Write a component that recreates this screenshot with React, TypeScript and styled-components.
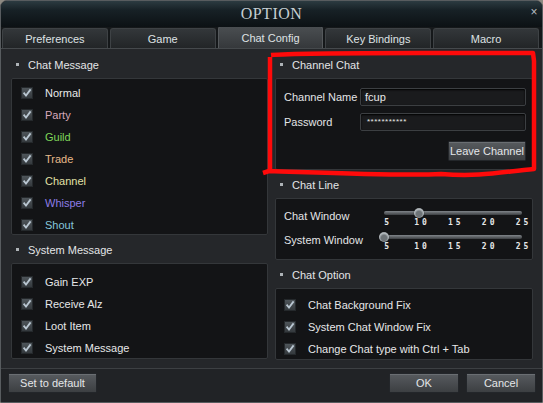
import React from "react";
import styled, { createGlobalStyle } from "styled-components";

const Global = createGlobalStyle`
  html, body { margin: 0; padding: 0; background: #8d8a82; }
  body { font-family: "Liberation Sans", Arial, sans-serif; }
  * { box-sizing: border-box; }
`;

const Window = styled.div`
  position: relative;
  width: 543px;
  height: 403px;
  display: flex;
  flex-direction: column;
  background: #1c1e20;
  border: 1px solid #585c5f;
  border-radius: 7px 7px 2px 2px;
  overflow: hidden;
`;

const TitleBar = styled.div`
  position: relative;
  height: 26px;
  flex: none;
  display: flex;
  align-items: center;
  justify-content: center;
  background: linear-gradient(#2c3b41 0%, #172126 35%, #0c1114 100%);
  font-family: "Liberation Serif", "Times New Roman", serif;
  font-size: 16px;
  letter-spacing: 0.5px;
  color: #c6ced2;
`;

const Close = styled.span`
  position: absolute;
  right: 4px;
  top: 4px;
  font-family: "Liberation Sans", Arial, sans-serif;
  font-size: 12px;
  color: #b8bec2;
`;

const TabRow = styled.div`
  height: 21px;
  flex: none;
  display: flex;
  align-items: flex-end;
  gap: 2px;
  padding: 0 3px 0 1px;
  background: #15181a;
`;

const Tab = styled.div<{ $active?: boolean }>`
  flex: 1;
  height: ${(p) => (p.$active ? "22px" : "20px")};
  display: flex;
  align-items: center;
  justify-content: center;
  font-size: 11px;
  color: #dfe2e4;
  border: 1px solid ${(p) => (p.$active ? "#55595c" : "#3e4245")};
  border-bottom: none;
  border-radius: 3px 3px 0 0;
  background: ${(p) =>
    p.$active
      ? "linear-gradient(#4a4e51, #35383b)"
      : "linear-gradient(#33373a, #222527)"};
`;

const Content = styled.div`
  position: relative;
  height: 320px;
  flex: none;
  display: grid;
  grid-template-columns: 257px 258px;
  column-gap: 7px;
  align-items: start;
  padding: 3px 9px 0 10px;
  background: #25272a;
  border-top: 1px solid #45494c;
`;

const Column = styled.div`
  display: flex;
  flex-direction: column;
  gap: 2px;
`;

const Section = styled.div`
  display: flex;
  flex-direction: column;
`;

const Header = styled.div`
  height: 26px;
  display: flex;
  align-items: center;
  gap: 9px;
  padding-left: 5px;
  padding-bottom: 1px;
  font-size: 11px;
  color: #e3e5e7;
  &::before {
    content: "";
    width: 3px;
    height: 3px;
    background: #aeb3b7;
  }
`;

const Box = styled.div<{ $h: number; $pt?: number }>`
  height: ${(p) => p.$h}px;
  padding-top: ${(p) => p.$pt ?? 4}px;
  background: #131416;
  border: 1px solid #34373a;
  border-radius: 2px;
`;

const CheckRow = styled.div<{ $pl?: number }>`
  height: 22px;
  display: flex;
  align-items: center;
  gap: 12px;
  padding-left: ${(p) => p.$pl ?? 9}px;
  font-size: 11px;
`;

const Label = styled.span<{ $c?: string }>`
  color: ${(p) => p.$c ?? "#e6e7e8"};
`;

const CheckBox = () => (
  <svg width="12" height="12" viewBox="0 0 12 12">
    <defs>
      <linearGradient id="cbg" x1="0" y1="0" x2="0" y2="1">
        <stop offset="0" stopColor="#4f565b" />
        <stop offset="1" stopColor="#33383c" />
      </linearGradient>
    </defs>
    <rect x="0.5" y="0.5" width="11" height="11" fill="url(#cbg)" stroke="#25292c" />
    <path d="M2.6 5.6 L5 8.6 L9.6 2.4" fill="none" stroke="#b9c6d1" strokeWidth="1.8" />
  </svg>
);

const Form = styled.div`
  display: grid;
  grid-template-columns: 76px 1fr;
  row-gap: 7px;
  align-items: center;
  padding: 9px 6px 0 8px;
  font-size: 11px;
  color: #e3e5e7;
`;

const Input = styled.div<{ $small?: boolean }>`
  height: 18px;
  display: flex;
  align-items: ${(p) => (p.$small ? "flex-start" : "center")};
  padding: ${(p) => (p.$small ? "3px 0 0 6px" : "0 0 0 4px")};
  background: #1a1b1d;
  border: 1px solid #3c3f42;
  border-radius: 2px;
  box-shadow: inset 0 1px 2px #000;
  font-size: ${(p) => (p.$small ? "8px" : "11px")};
  letter-spacing: ${(p) => (p.$small ? "0.5px" : "0")};
  color: #e6e7e8;
`;

const ButtonRow = styled.div`
  grid-column: 1 / 3;
  display: flex;
  justify-content: flex-end;
  padding-top: 3px;
`;

const Button = styled.div<{ $w: number }>`
  width: ${(p) => p.$w}px;
  height: 20px;
  display: flex;
  align-items: center;
  justify-content: center;
  font-size: 11px;
  color: #e4e6e8;
  background: linear-gradient(#575b5f, #3c3f42);
  border: 1px solid #23262a;
  box-shadow: inset 0 1px 0 #6a6e72;
  border-radius: 1px;
`;

const SliderBox = styled.div`
  display: flex;
  flex-direction: column;
  padding: 8px 0 0 8px;
`;

const SliderRow = styled.div`
  height: 24px;
  display: grid;
  grid-template-columns: 96px 142px;
  font-size: 11px;
  color: #e3e5e7;
`;

const SliderLabel = styled.div`
  padding-top: 3px;
`;

const SliderArea = styled.div`
  display: flex;
  flex-direction: column;
  padding-left: 4px;
`;

const Track = styled.div`
  position: relative;
  height: 12px;
  width: 138px;
  &::before {
    content: "";
    position: absolute;
    left: 0;
    right: 0;
    top: 4px;
    height: 4px;
    border-radius: 2px;
    background: linear-gradient(#80858a, #3b3e41);
  }
`;

const Thumb = styled.div`
  position: absolute;
  top: 1px;
  width: 10px;
  height: 10px;
  margin-left: -5px;
  border-radius: 50%;
  background: radial-gradient(circle at 50% 60%, #6d7377 0 35%, #b3b9bd 60%, #7b8084 100%);
  box-shadow: 0 0 1px #000;
`;

const Ticks = styled.div`
  position: relative;
  height: 9px;
  width: 138px;
`;

const Tick = styled.span`
  position: absolute;
  top: -1px;
  transform: translateX(-50%);
  font-family: "DejaVu Sans Mono", monospace;
  font-size: 8px;
  font-weight: bold;
  letter-spacing: 3px;
  text-indent: 3px;
  color: #e6e7e8;
  line-height: 10px;
`;

const Footer = styled.div`
  flex: 1;
  display: flex;
  align-items: flex-start;
  gap: 7px;
  padding: 4px 6px 0 7px;
  background: #212326;
  border-top: 1px solid #3d4043;
`;

const Spacer = styled.div`
  flex: 1;
`;

const Annotation = styled.svg`
  position: absolute;
  left: 0;
  top: 0;
  pointer-events: none;
`;

const ticks = [5, 10, 15, 20, 25];

const Slider = ({ value }: { value: number }) => (
  <SliderArea>
    <Track>
      <Thumb style={{ left: `${((value - 5) / 20) * 100}%` }} />
    </Track>
    <Ticks>
      {ticks.map((t) => (
        <Tick key={t} style={{ left: `${((t - 5) / 20) * 98 + 2}%` }}>
          {t}
        </Tick>
      ))}
    </Ticks>
  </SliderArea>
);

const chatItems: [string, string][] = [
  ["Normal", "#e8e9ea"],
  ["Party", "#d8a9bb"],
  ["Guild", "#7fd65a"],
  ["Trade", "#e6b98a"],
  ["Channel", "#e2e1a6"],
  ["Whisper", "#8d7de6"],
  ["Shout", "#86c6dc"],
];

const sysItems = ["Gain EXP", "Receive Alz", "Loot Item", "System Message"];
const optItems = [
  "Chat Background Fix",
  "System Chat Window Fix",
  "Change Chat type with Ctrl + Tab",
];

export default function App() {
  return (
    <>
      <Global />
      <Window>
        <TitleBar>
          OPTION
          <Close>×</Close>
        </TitleBar>
        <TabRow>
          <Tab>Preferences</Tab>
          <Tab>Game</Tab>
          <Tab $active>Chat Config</Tab>
          <Tab>Key Bindings</Tab>
          <Tab>Macro</Tab>
        </TabRow>
        <Content>
          <Column>
            <Section>
              <Header>Chat Message</Header>
              <Box $h={157} $pt={3}>
                {chatItems.map(([t, c]) => (
                  <CheckRow key={t}>
                    <CheckBox />
                    <Label $c={c}>{t}</Label>
                  </CheckRow>
                ))}
              </Box>
            </Section>
            <Section>
              <Header>System Message</Header>
              <Box $h={96} $pt={7}>
                {sysItems.map((t) => (
                  <CheckRow key={t}>
                    <CheckBox />
                    <Label>{t}</Label>
                  </CheckRow>
                ))}
              </Box>
            </Section>
          </Column>
          <Column>
            <Section>
              <Header>Channel Chat</Header>
              <Box $h={92} $pt={0}>
                <Form>
                  <span>Channel Name</span>
                  <Input>fcup</Input>
                  <span>Password</span>
                  <Input $small>***********</Input>
                  <ButtonRow>
                    <Button $w={78}>Leave Channel</Button>
                  </ButtonRow>
                </Form>
              </Box>
            </Section>
            <Section>
              <Header>Chat Line</Header>
              <Box $h={62} $pt={0}>
                <SliderBox>
                  <SliderRow>
                    <SliderLabel>Chat Window</SliderLabel>
                    <Slider value={10} />
                  </SliderRow>
                  <SliderRow>
                    <SliderLabel>System Window</SliderLabel>
                    <Slider value={5} />
                  </SliderRow>
                </SliderBox>
              </Box>
            </Section>
            <Section>
              <Header>Chat Option</Header>
              <Box $h={72} $pt={5}>
                {optItems.map((t) => (
                  <CheckRow key={t} $pl={8}>
                    <CheckBox />
                    <Label>{t}</Label>
                  </CheckRow>
                ))}
              </Box>
            </Section>
          </Column>
          <Annotation width="543" height="140" viewBox="0 48 543 140">
            <path
              d="M270 54 C300 51 400 52 532 52 L533 60 L533 168 C500 171 480 176 440 173 C400 175 330 172 268 170 L262 172 M269 168 L269 56"
              fill="none"
              stroke="#ff0a0a"
              strokeWidth="4.5"
              strokeLinejoin="round"
            />
          </Annotation>
        </Content>
        <Footer>
          <Button $w={89}>Set to default</Button>
          <Spacer />
          <Button $w={70}>OK</Button>
          <Button $w={70}>Cancel</Button>
        </Footer>
      </Window>
    </>
  );
}
